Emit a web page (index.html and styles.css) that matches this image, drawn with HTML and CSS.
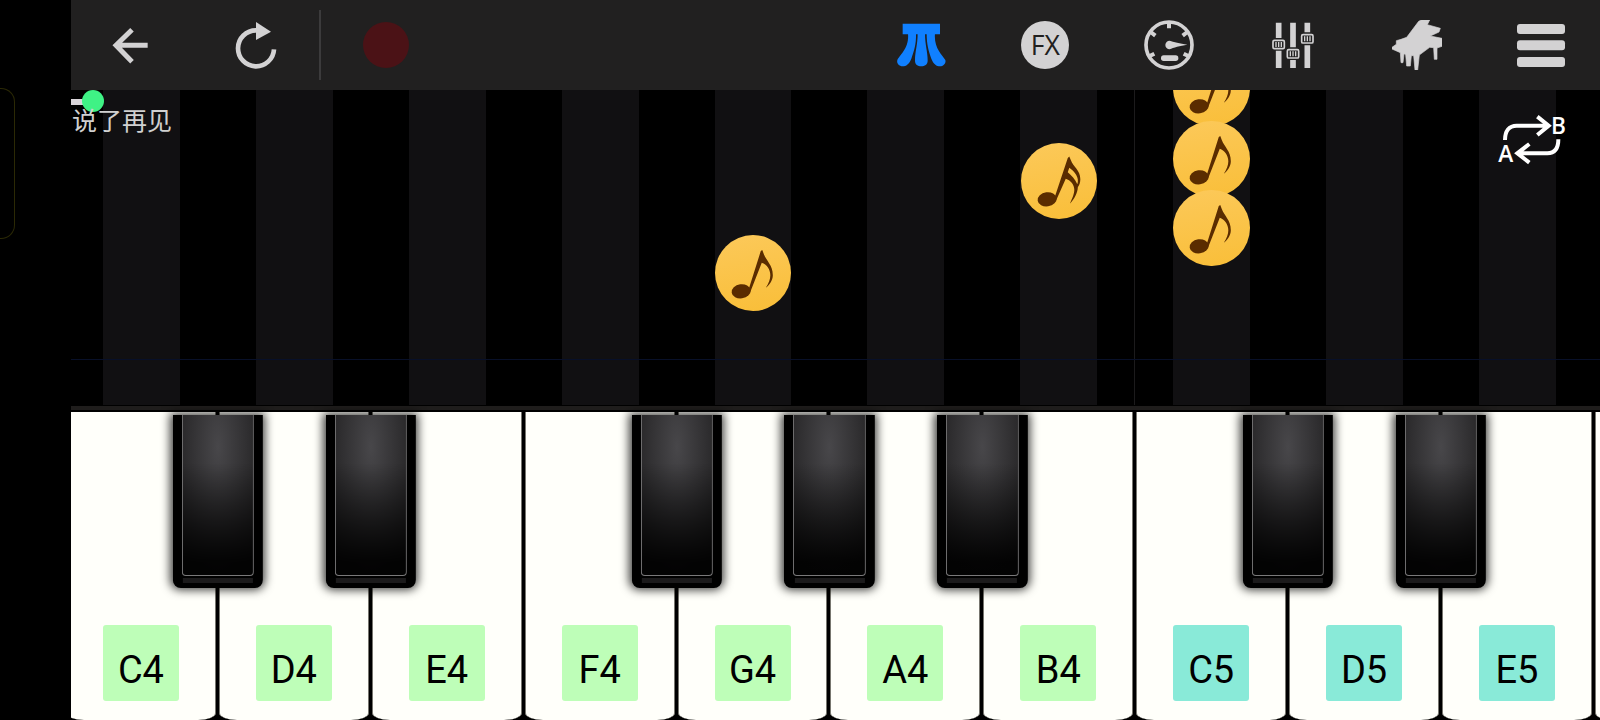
FILE: index.html
```html
<!DOCTYPE html>
<html lang="zh-CN">
<head>
<meta charset="utf-8">
<title>Piano</title>
<link rel="stylesheet" href="styles.css">
</head>
<body class="screen">
<svg width="0" height="0" class="defs" aria-hidden="true">
  <defs>
    <symbol id="eighth" viewBox="0 0 76 76">
      <ellipse cx="26" cy="56" rx="9.500" ry="7" transform="rotate(-8 26 56)"/>
      <path d="M33.500 54 45.500 16 47 15 48.500 19C51 26 57.500 30 57.500 40 57.500 45 54 50 50.500 52.500 53.500 48 55 44 55 40 55 34 51 29 46.500 27.500L35 57Z"/>
    </symbol>
    <symbol id="sixteenth" viewBox="0 0 76 76">
      <ellipse cx="26" cy="56" rx="9.500" ry="7" transform="rotate(-8 26 56)"/>
      <path d="M33.500 54 46.500 15 48 13.500 49.500 17C52 24 59 27 59 36 59 39 58 42 56.500 44 56.500 49 53 56 48.500 60.500 51.500 54 53 50 53 46.500 53 41 49 37 44.500 35.500L35 57ZM46.500 29C50 32 54 36 56 41 58.500 34 53 28 48 24.500Z" fill-rule="evenodd"/>
    </symbol>
  </defs>
</svg>
<aside class="gutter"></aside>
<div class="app">
  <header class="toolbar">
    <button class="tool" aria-label="Back"><svg class="icon" viewBox="0 0 150 150"><path d="M128 76H32M81 29 33 76 81 125" fill="none" stroke="currentColor" stroke-width="15"/></svg></button>
    <button class="tool" aria-label="Restart"><svg class="icon" viewBox="0 0 150 150"><path d="M135 88A54 54 0 1 1 81 31" fill="none" stroke="currentColor" stroke-width="14"/><path d="M81 6V60L126 35Z" fill="currentColor"/></svg></button>
    <span class="divider"></span>
    <button class="tool" aria-label="Record"><span class="record"></span></button>
    <span class="spacer"></span>
    <button class="tool tool-active" aria-label="Waterfall"><svg class="icon" viewBox="0 0 150 150"><g fill="currentColor"><path d="M20 11H132V43H20Z"/><path d="M36 40H60C61 75 54 92 46 116 40 132 30 139 20 139 10 139 1 130 4 120 14 102 40 84 36 40Z"/><path d="M65 40H87C87 75 95 95 95 122 95 133 86 139 76 139 65 139 57 133 57 122 57 95 65 75 65 40Z"/><path d="M92 40H117C113 84 137 102 148 120 151 130 142 139 132 139 122 139 112 132 106 116 98 92 92 75 92 40Z"/></g></svg></button>
    <button class="tool" aria-label="Effects"><svg class="icon" viewBox="0 0 150 150"><circle cx="75" cy="75" r="72" fill="currentColor"/><text class="fx" x="76" y="106" text-anchor="middle">FX</text></svg></button>
    <button class="tool" aria-label="Tempo"><svg class="icon" viewBox="0 0 150 150"><circle cx="75" cy="75" r="69" fill="none" stroke="currentColor" stroke-width="11"/><path d="M75 8V25M20 36 34 47M130 36 116 47M17 108 31 101M133 108 119 101" stroke="currentColor" stroke-width="12"/><path d="M77 62C88 66 108 70 130 74 108 78 88 82 77 88A13 13 0 1 1 77 62Z" fill="currentColor"/><rect x="51" y="106" width="52" height="17" rx="8" fill="currentColor"/></svg></button>
    <button class="tool" aria-label="Mixer"><svg class="icon" viewBox="0 0 150 150"><path d="M32 8V54M32 92V144M75 8V82M75 120V144M118 8V37M118 76V144" stroke="currentColor" stroke-width="17"/><g fill="none" stroke="currentColor" stroke-width="5"><rect x="15" y="61" width="34" height="25" rx="4"/><rect x="58" y="89" width="34" height="25" rx="4"/><rect x="101" y="44" width="34" height="25" rx="4"/><path d="M24 66V81M32 66V81M40 66V81M67 94V109M75 94V109M83 94V109M110 49V64M118 49V64M126 49V64" stroke-width="4"/></g></svg></button>
    <button class="tool" aria-label="Instrument"><svg class="icon" viewBox="0 0 150 150"><path d="M0 82 13 73V62L27 58 44 52 80 4 88 0H113L106 14 145 25 141 36 115 48 150 55V79L135 84V118H127L125 83 113 82 82 105 77 150H69L65 107H58L55 138H44L41 104 36 101 33 128H27L25 98 0 87Z" fill="currentColor" stroke="currentColor" stroke-width="2"/></svg></button>
    <button class="tool" aria-label="Menu"><svg class="icon" viewBox="0 0 150 150"><g fill="currentColor"><rect x="3" y="12" width="144" height="30" rx="9"/><rect x="3" y="61" width="144" height="30" rx="9"/><rect x="3" y="111" width="144" height="30" rx="9"/></g></svg></button>
  </header>

  <main class="roll">
    <div class="lanes">
      <div class="lane"></div><div class="lane"></div><div class="lane"></div><div class="lane"></div>
      <div class="lane"><svg class="note note-g4"><use href="#eighth"/></svg></div>
      <div class="lane"></div>
      <div class="lane lane-octave"><svg class="note note-b4"><use href="#sixteenth"/></svg></div>
      <div class="lane"><svg class="note note-c5-third"><use href="#eighth"/></svg><svg class="note note-c5-second"><use href="#eighth"/></svg><svg class="note note-c5-first"><use href="#eighth"/></svg></div>
      <div class="lane"></div><div class="lane"></div><div class="lane"></div>
    </div>
    <div class="beat"></div>
    <div class="song">
      <input class="seek" type="range" min="0" max="100" step="0.01" value="0.76" aria-label="说了再见">
      <span class="title">说了再见</span>
    </div>
    <button class="loop" aria-label="A B loop"><svg class="loop-icon" viewBox="0 0 240 210"><path d="M45 105C45 78 57 62 80 62H172M142 35 176 62 142 90M205 103C205 130 196 145 172 145H86M118 117 82 145 118 173" fill="none" stroke="currentColor" stroke-width="12"/><text class="loop-text" x="25" y="170">A</text><text class="loop-text" x="183" y="86">B</text></svg></button>
  </main>

  <section class="keyboard">
    <div class="rail"></div>
    <div class="keys">
      <div class="slot"><button class="white"><span class="name">C4</span></button><button class="black" aria-label="C#4"><span class="cap"></span></button></div>
      <div class="slot"><button class="white"><span class="name">D4</span></button><button class="black" aria-label="D#4"><span class="cap"></span></button></div>
      <div class="slot"><button class="white"><span class="name">E4</span></button></div>
      <div class="slot"><button class="white"><span class="name">F4</span></button><button class="black" aria-label="F#4"><span class="cap"></span></button></div>
      <div class="slot"><button class="white"><span class="name">G4</span></button><button class="black" aria-label="G#4"><span class="cap"></span></button></div>
      <div class="slot"><button class="white"><span class="name">A4</span></button><button class="black" aria-label="A#4"><span class="cap"></span></button></div>
      <div class="slot"><button class="white"><span class="name">B4</span></button></div>
      <div class="slot"><button class="white"><span class="name name-high">C5</span></button><button class="black" aria-label="C#5"><span class="cap"></span></button></div>
      <div class="slot"><button class="white"><span class="name name-high">D5</span></button><button class="black" aria-label="D#5"><span class="cap"></span></button></div>
      <div class="slot"><button class="white"><span class="name name-high">E5</span></button></div>
      <div class="slot"><button class="white" aria-label="F5"></button></div>
    </div>
  </section>
</div>
</body>
</html>
```
FILE: styles.css
```css
* {
  box-sizing: border-box;
}

.screen {
  display: flex;
  height: 100vh;
  margin: 0;
  overflow: hidden;
  background: #000;
  color: #d3d2d3;
  font-family: Roboto, "Noto Sans CJK SC", sans-serif;
}

.defs {
  position: absolute;
}

button {
  margin: 0;
  padding: 0;
  border: 0;
  background: none;
  color: inherit;
  font: inherit;
}

/* Strip beside the app, with the camera outline */
.gutter {
  flex: 0 0 71px;
  padding-top: 88px;
}

.gutter::before {
  content: "";
  display: block;
  width: 14px;
  height: 149px;
  border: 1px solid #2b2905;
  border-left: 0;
  border-radius: 0 14px 14px 0;
}

.app {
  display: flex;
  flex: 1;
  flex-direction: column;
  min-width: 0;
}

/* Toolbar */
.toolbar {
  display: flex;
  flex: 0 0 90px;
  align-items: center;
  gap: 6px;
  background: #212020;
}

.tool {
  display: flex;
  flex: 0 0 118px;
  align-items: center;
  justify-content: center;
  height: 90px;
}

.tool-active {
  color: #1080ff;
}

.icon {
  width: 50px;
  height: 50px;
}

.fx {
  fill: #212020;
  font-family: "Open Sans", sans-serif;
  font-size: 80px;
}

.divider {
  width: 2px;
  height: 70px;
  background: #3c3b3c;
}

.record {
  width: 46px;
  height: 46px;
  border-radius: 50%;
  background: #4b1216;
}

.spacer {
  flex: 1;
}

/* Falling notes */
.roll {
  position: relative;
  flex: 1;
  overflow: hidden;
}

.lanes,
.keys {
  display: grid;
  grid-template-columns: repeat(11, 10%);
  width: 100%;
  margin-left: -6px;
}

.lanes {
  height: 100%;
}

.lane {
  position: relative;
  background: linear-gradient(90deg, transparent 25%, #111012 25%, #111012 75%, transparent 75%);
}

.lane-octave {
  box-shadow: inset -1px 0 #1c1b1c;
}

.note {
  position: absolute;
  left: 25%;
  width: 50%;
  aspect-ratio: 1;
  border-radius: 50%;
  background: linear-gradient(170deg, #fcc95a, #f9be38);
  fill: #5a2c00;
}

.note-g4 {
  top: 145px;
}

.note-b4 {
  top: 53px;
}

.note-c5-third {
  top: -40px;
}

.note-c5-second {
  top: 31px;
}

.note-c5-first {
  top: 100px;
}

.beat {
  position: absolute;
  right: 0;
  bottom: 45px;
  left: 0;
  height: 1px;
  background: #081029;
}

.song {
  position: absolute;
  top: 0;
  left: 0;
  display: flex;
  flex-direction: column;
  width: 100%;
}

.seek {
  width: 100%;
  height: 22px;
  margin: 0;
  appearance: none;
  background: linear-gradient(#d9d5d9, #d9d5d9) 0 9px / 20px 6px no-repeat;
}

.seek::-webkit-slider-thumb {
  width: 22px;
  height: 22px;
  appearance: none;
  border-radius: 50%;
  background: #3ff285;
}

.title {
  margin-top: -8px;
  padding-left: 1px;
  color: #d0d0d0;
  font-family: "Noto Sans CJK SC", sans-serif;
  font-size: 25px;
  line-height: 30px;
}

.loop {
  position: absolute;
  top: 15px;
  right: 30px;
  color: #fff;
}

.loop-icon {
  display: block;
  width: 80px;
  height: 70px;
}

.loop-text {
  fill: currentColor;
  font-family: "Open Sans", sans-serif;
  font-size: 68px;
  font-weight: 600;
}

/* Keyboard */
.keyboard {
  display: flex;
  flex: 1;
  flex-direction: column;
  overflow: hidden;
}

.rail {
  flex: 0 0 7px;
  border-top: 1px solid #000;
  border-bottom: 2px solid #000;
  background: #1f1d1c;
}

.keys {
  flex: 1;
}

.slot {
  position: relative;
  display: flex;
  padding: 0 2px 0 1px;
  background: #000;
}

.white {
  display: flex;
  flex: 1;
  align-items: flex-end;
  justify-content: center;
  padding-bottom: 19px;
  border: solid #77766f;
  border-width: 0 1px;
  border-radius: 0 0 18px 18px / 0 0 7px 7px;
  background: #fffffa;
}

.name {
  width: 76px;
  height: 76px;
  padding-top: 13px;
  border-radius: 3px;
  background: #befeb8;
  color: #000;
  font-size: 38px;
  line-height: 64px;
}

.name-high {
  background: #89ead8;
}

.black {
  position: absolute;
  z-index: 1;
  top: 1%;
  left: 100%;
  display: flex;
  width: 59%;
  height: 56%;
  padding: 0 9px 12px;
  border-radius: 0 0 8px 8px;
  background: linear-gradient(#1b1a1b, #1b1a1b) 50% calc(100% - 5px) / 70px 5px no-repeat #000;
  box-shadow: 0 0 10px 2px rgba(0, 0, 0, 0.75);
  transform: translateX(-50%);
}

.cap {
  flex: 1;
  border: 1px solid #7a797a;
  border-top: 0;
  border-radius: 0 0 4px 4px;
  background:
    linear-gradient(transparent 30%, rgba(0, 0, 0, 0.9) 92%),
    radial-gradient(ellipse 75% 90% at 50% 20%, #48474a, #1d1c1d);
}
```
